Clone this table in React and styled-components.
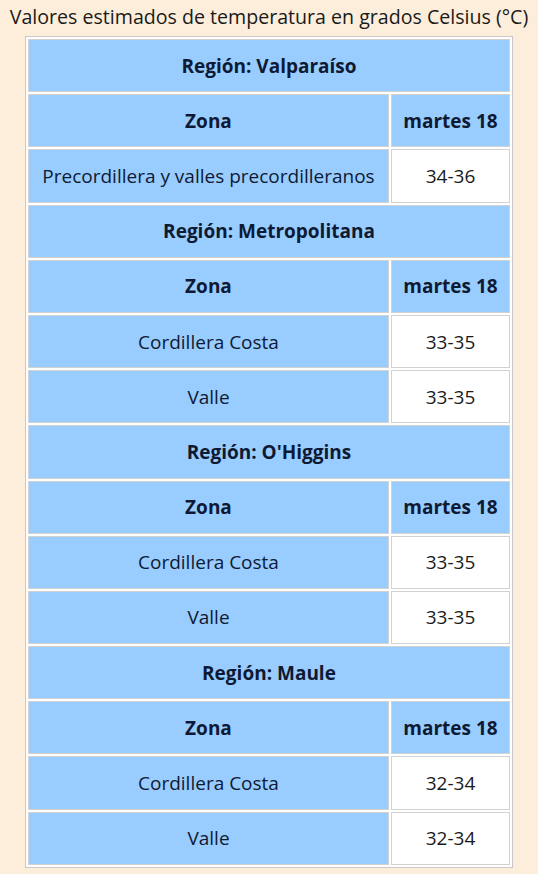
import React from 'react'
import styled, { createGlobalStyle } from 'styled-components'

const Global = createGlobalStyle`
  html, body {
    margin: 0;
    padding: 0;
    background: #fdeedb;
  }
  body {
    font-family: 'Open Sans', 'Noto Sans', sans-serif;
    color: #0e1a33;
  }
`

const Page = styled.div`
  width: 538px;
  height: 874px;
  display: flex;
  flex-direction: column;
  align-items: center;
`

const Title = styled.div`
  font-size: 19.6px;
  line-height: 24px;
  padding-top: 5px;
  height: 31px;
  color: #1a1a1a;
  white-space: nowrap;
`

const Table = styled.table`
  width: 488px;
  border: 1px solid #c9c9c9;
  border-spacing: 2px;
  background: #fff;
  table-layout: fixed;
`

const Cell = styled.td`
  height: 53.2px;
  padding: 0 4px;
  border: 1px solid #d2d2d2;
  text-align: center;
  font-size: 19px;
  white-space: nowrap;
  background: ${({ $white }) => ($white ? '#fff' : '#99ccff')};
  color: ${({ $white }) => ($white ? '#1a1a1a' : '#0e1a33')};
  font-weight: ${({ $bold }) => ($bold ? 700 : 400)};
  box-sizing: border-box;
`

const data = [
  { region: 'Valparaíso', rows: [['Precordillera y valles precordilleranos', '34-36']] },
  { region: 'Metropolitana', rows: [['Cordillera Costa', '33-35'], ['Valle', '33-35']] },
  { region: "O'Higgins", rows: [['Cordillera Costa', '33-35'], ['Valle', '33-35']] },
  { region: 'Maule', rows: [['Cordillera Costa', '32-34'], ['Valle', '32-34']] }
]

const Region = ({ region, rows }) => (
  <>
    <tr>
      <Cell as="th" colSpan={2} $bold>Región: {region}</Cell>
    </tr>
    <tr>
      <Cell as="th" $bold>Zona</Cell>
      <Cell as="th" $bold>martes 18</Cell>
    </tr>
    {rows.map(([zone, value], i) => (
      <tr key={i}>
        <Cell>{zone}</Cell>
        <Cell $white>{value}</Cell>
      </tr>
    ))}
  </>
)

export default () => (
  <Page>
    <Global />
    <Title>Valores estimados de temperatura en grados Celsius (°C)</Title>
    <Table>
      <colgroup>
        <col style={{ width: 361 }} />
        <col style={{ width: 119 }} />
      </colgroup>
      <tbody>
        {data.map(r => <Region key={r.region} {...r} />)}
      </tbody>
    </Table>
  </Page>
)
